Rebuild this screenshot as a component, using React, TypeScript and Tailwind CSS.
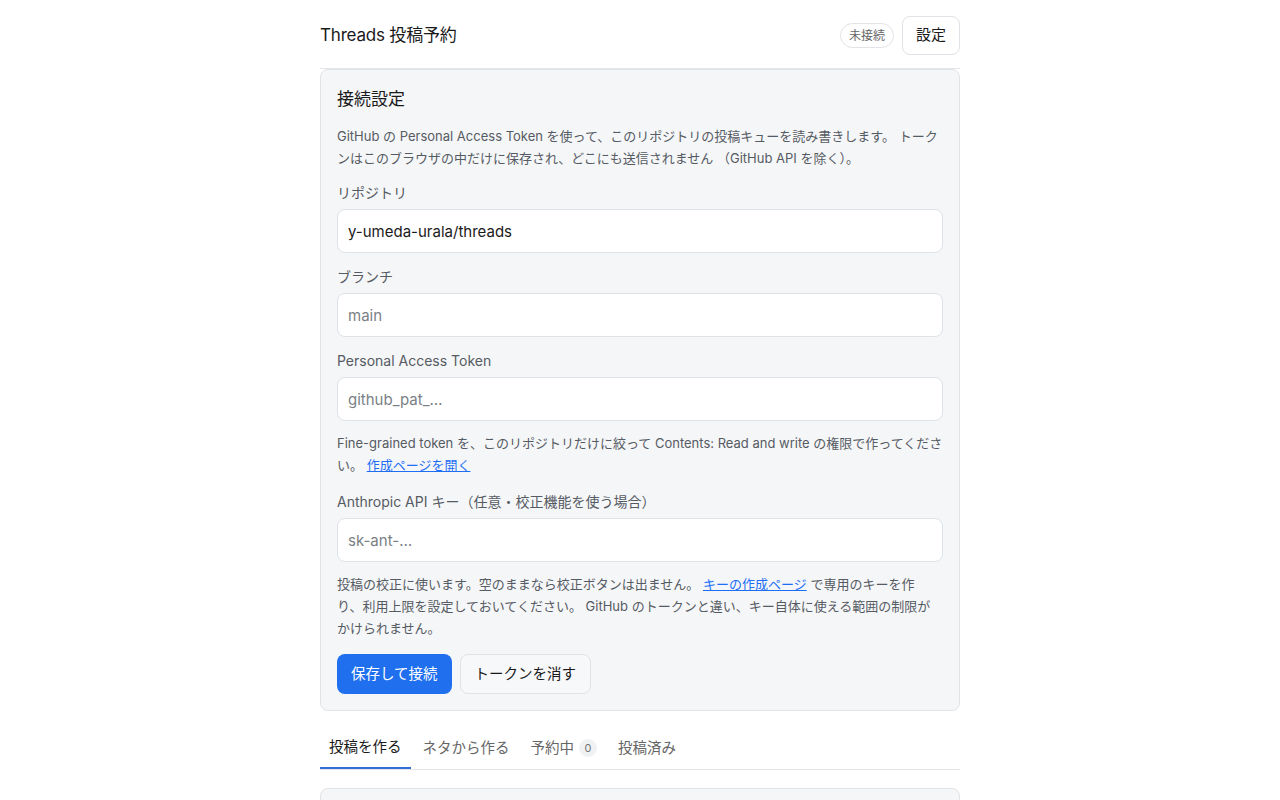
import React from 'react';

const font = "font-['Inter','Noto_Sans_CJK_JP',sans-serif]";

function Field({ label, value, placeholder }: { label: string; value?: string; placeholder?: string }) {
  return (
    <label className="block">
      <span className="block text-[14px] leading-[20px] text-[#555b63] mb-[6px]">{label}</span>
      <input
        type="text"
        defaultValue={value}
        placeholder={placeholder}
        className="w-full h-[44px] px-[10px] bg-white border border-[#dfe2e6] rounded-lg text-[15px] text-[#1a1a1a] placeholder:text-[#7a7f86] focus:outline-none"
      />
    </label>
  );
}

export default function App() {
  return (
    <div className={`${font} min-h-screen bg-white text-[#1a1a1a]`}>
      <div className="w-[640px] mx-auto">
        <header className="flex items-center justify-between pt-4 pb-[13px] border-b border-[#e3e5e8]">
          <h1 className="text-[17px] font-normal tracking-[-0.2px]">Threads 投稿予約</h1>
          <div className="flex items-center gap-2">
            <span className="px-2 h-[25px] flex items-center rounded-full border border-[#e1e3e6] text-[12px] text-[#666]">未接続</span>
            <button className="h-[39px] px-[13px] rounded-lg border border-[#dfe2e6] bg-white text-[15px]">設定</button>
          </div>
        </header>

        <section className="bg-[#f5f6f8] border border-[#e1e3e6] rounded-lg px-4 pt-[17px] pb-4">
          <h2 className="text-[17px] leading-[24px] font-normal">接続設定</h2>
          <p className="mt-[14px] text-[13px] leading-[22px] text-[#555b63]">
            GitHub の Personal Access Token を使って、このリポジトリの投稿キューを読み書きします。 トークンはこのブラウザの中だけに保存され、どこにも送信されません （GitHub API を除く）。
          </p>
          <div className="mt-[14px] space-y-[14px]">
            <Field label="リポジトリ" value="y-umeda-urala/threads" />
            <Field label="ブランチ" placeholder="main" />
            <div className="pb-[2px]">
              <Field label="Personal Access Token" placeholder="github_pat_…" />
              <p className="mt-[11px] text-[13px] leading-[22px] text-[#555b63]">
                Fine-grained token を、このリポジトリだけに絞って Contents: Read and write の権限で作ってください。 <a href="#" className="text-[#1d6ef5] underline">作成ページを開く</a>
              </p>
            </div>
            <div>
              <Field label="Anthropic API キー（任意・校正機能を使う場合）" placeholder="sk-ant-…" />
              <p className="mt-[11px] text-[13px] leading-[22px] text-[#555b63] pr-[6px]">
                投稿の校正に使います。空のままなら校正ボタンは出ません。 <a href="#" className="text-[#1d6ef5] underline">キーの作成ページ</a> で専用のキーを作り、利用上限を設定しておいてください。 GitHub のトークンと違い、キー自体に使える範囲の制限がかけられません。
              </p>
            </div>
          </div>
          <div className="mt-[15px] flex gap-2">
            <button className="h-10 px-[14px] rounded-lg bg-[#1f6fef] text-white text-[14.5px]">保存して接続</button>
            <button className="h-10 px-[14px] rounded-lg border border-[#dfe2e6] bg-[#f7f8fa] text-[14.5px]">トークンを消す</button>
          </div>
        </section>

        <nav className="mt-4 flex gap-[3px] border-b border-[#e3e5e8]">
          <button className="px-[9px] h-[42px] text-[14.5px] text-[#1a1a1a] border-b-2 border-[#2f6fd6] -mb-px">投稿を作る</button>
          <button className="px-[9px] h-[42px] text-[14.5px] text-[#666]">ネタから作る</button>
          <button className="px-[9px] h-[42px] text-[14.5px] text-[#666] flex items-center gap-[5px]">
            予約中
            <span className="min-w-[18px] h-[18px] px-1 rounded-full bg-[#f0f1f3] text-[11px] text-[#777] flex items-center justify-center">0</span>
          </button>
          <button className="px-[9px] h-[42px] text-[14.5px] text-[#666]">投稿済み</button>
        </nav>

        <section className="mt-[18px] h-[60px] bg-[#f5f6f8] border border-[#e1e3e6] rounded-lg" />
      </div>
    </div>
  );
}
